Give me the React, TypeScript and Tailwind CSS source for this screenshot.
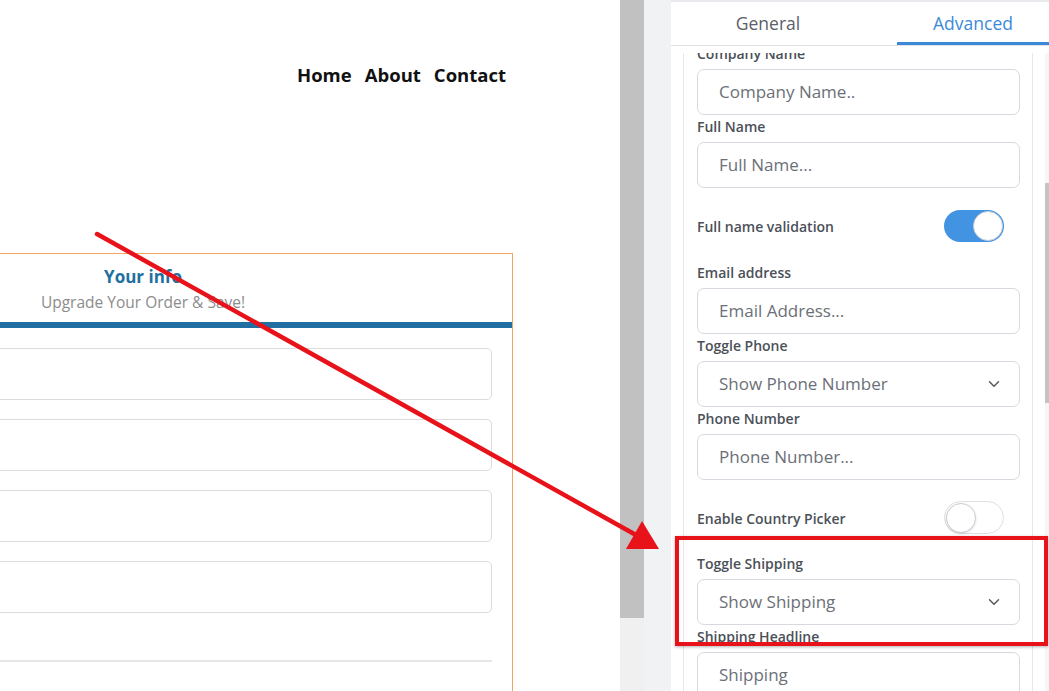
import { ChevronDown } from "lucide-react";

const panelFont = { fontFamily: '"Open Sans", "Noto Sans", sans-serif' };

const Label = ({ text }: { text: string }) => (
  <div className="mt-[2px] mb-[5px] h-[20px] text-[14px] leading-[20px] font-semibold text-[#4b5058]">{text}</div>
);

const TextBox = ({ text }: { text: string }) => (
  <div className="h-[46px] border border-[#d6dae0] rounded-[7px] flex items-center pl-[21px] text-[17px] text-[#6b7078] bg-white">
    {text}
  </div>
);

const SelectBox = ({ text }: { text: string }) => (
  <div className="h-[46px] border border-[#d6dae0] rounded-[7px] flex items-center justify-between pl-[21px] pr-[16px] text-[17px] text-[#6b7078] bg-white">
    <span>{text}</span>
    <ChevronDown size={18} strokeWidth={2} className="text-[#555a61]" />
  </div>
);

const ToggleRow = ({ text, on }: { text: string; on: boolean }) => (
  <div className={`${on ? "mt-[21px] mb-[21px]" : "mt-[21px] mb-[20px]"} h-[33px] flex items-center justify-between pr-[16px]`}>
    <span className="text-[14px] font-semibold text-[#4b5058] mt-[2px]">{text}</span>
    {on ? (
      <div className="w-[60px] h-[32px] rounded-full bg-[#4393e3] flex items-center justify-end pr-[1px]">
        <div className="w-[30px] h-[30px] rounded-full bg-white border border-[#c9ccd1]" />
      </div>
    ) : (
      <div className="w-[60px] h-[33px] rounded-full bg-white border border-[#dcdfe3] flex items-center pl-[1px]">
        <div className="w-[30px] h-[30px] rounded-full bg-white border border-[#c9ccd1] shadow-sm" />
      </div>
    )}
  </div>
);

const CardInput = ({ first }: { first?: boolean }) => (
  <div className={`${first ? "" : "mt-[19px]"} h-[52px] border border-[#dcdcdc] rounded-[5px]`} />
);

export default function App() {
  return (
    <div className="relative w-[1049px] h-[691px] overflow-hidden bg-white flex">
      {/* preview */}
      <div className="w-[620px] h-[691px] overflow-hidden flex flex-col" style={{ fontFamily: '"Open Sans", "Noto Sans", sans-serif' }}>
        <nav className="pt-[64px] h-[86px] pl-[297px] flex gap-[13px] text-[18.5px] leading-[22px] font-bold text-[#111]">
          <span>Home</span>
          <span>About</span>
          <span>Contact</span>
        </nav>
        <div className="mt-[167px] -ml-[227px] w-[740px] shrink-0 h-[500px] border border-[#f2a462] flex flex-col">
          <div className="pt-[12px] text-center">
            <div className="text-[17px] leading-[22px] font-bold text-[#20709f]">Your info</div>
            <div className="mt-[4px] text-[15.5px] leading-[20px] text-[#8c8c8c]">Upgrade Your Order &amp; Save!</div>
          </div>
          <div className="mt-[10px] h-[6px] bg-[#1f6fa3]" />
          <div className="mt-[20px] pl-[20px] pr-[20px] flex flex-col">
            <CardInput first />
            <CardInput />
            <CardInput />
            <CardInput />
            <div className="mt-[47px] h-[2px] bg-[#e6e6e8]" />
          </div>
        </div>
      </div>

      {/* preview scrollbar */}
      <div className="w-[24px] h-[691px] flex flex-col bg-[#f0f0f0]">
        <div className="h-[618px] bg-[#c1c1c1]" />
      </div>
      <div className="w-[27px] h-[691px] bg-[#f1f2f4]" />

      {/* settings panel */}
      <div className="flex-1 h-[691px] flex flex-col bg-white border-t-2 border-[#e8eaed]" style={panelFont}>
        <div className="h-[44px] flex border-b border-[#dfe2e6] text-[17.5px]">
          <div className="w-[226px] flex items-center justify-center pr-[32px] text-[#5b6068]">General</div>
          <div className="flex-1 flex items-center justify-center text-[#3b8ad9] border-b-[3px] border-[#3b8ad9] pt-[3px]">Advanced</div>
        </div>
        <div className="flex-1 flex overflow-hidden pt-[7px]">
          <div className="w-[12px]" />
          <div className="w-[350px] border-l border-r border-[#e5e7eb] overflow-hidden">
            <div className="-mt-[11px] pl-[13px] pr-[12px]">
              <Label text="Company Name" />
              <TextBox text="Company Name.." />
              <Label text="Full Name" />
              <TextBox text="Full Name..." />
              <ToggleRow text="Full name validation" on />
              <Label text="Email address" />
              <TextBox text="Email Address..." />
              <Label text="Toggle Phone" />
              <SelectBox text="Show Phone Number" />
              <Label text="Phone Number" />
              <TextBox text="Phone Number..." />
              <ToggleRow text="Enable Country Picker" on={false} />
              <Label text="Toggle Shipping" />
              <SelectBox text="Show Shipping" />
              <Label text="Shipping Headline" />
              <TextBox text="Shipping" />
            </div>
          </div>
          <div className="w-[12px]" />
          <div className="w-[4px] flex flex-col bg-[#f6f6f6]">
            <div className="h-[130px]" />
            <div className="h-[220px] bg-[#c4c4c4]" />
          </div>
        </div>
      </div>

      {/* annotation overlays */}
      <div className="absolute left-[675px] top-[536px] w-[373px] h-[110px] border-4 border-[#e8121a] shadow-[0_1px_3px_rgba(0,0,0,0.3)]" />
      <svg className="absolute left-0 top-0 pointer-events-none" width="1049" height="691">
        <line x1="97" y1="234" x2="636" y2="535" stroke="#e8121a" strokeWidth="4.5" strokeLinecap="round" />
        <polygon points="659,549 626,549 642,521" fill="#e8121a" />
      </svg>
    </div>
  );
}
